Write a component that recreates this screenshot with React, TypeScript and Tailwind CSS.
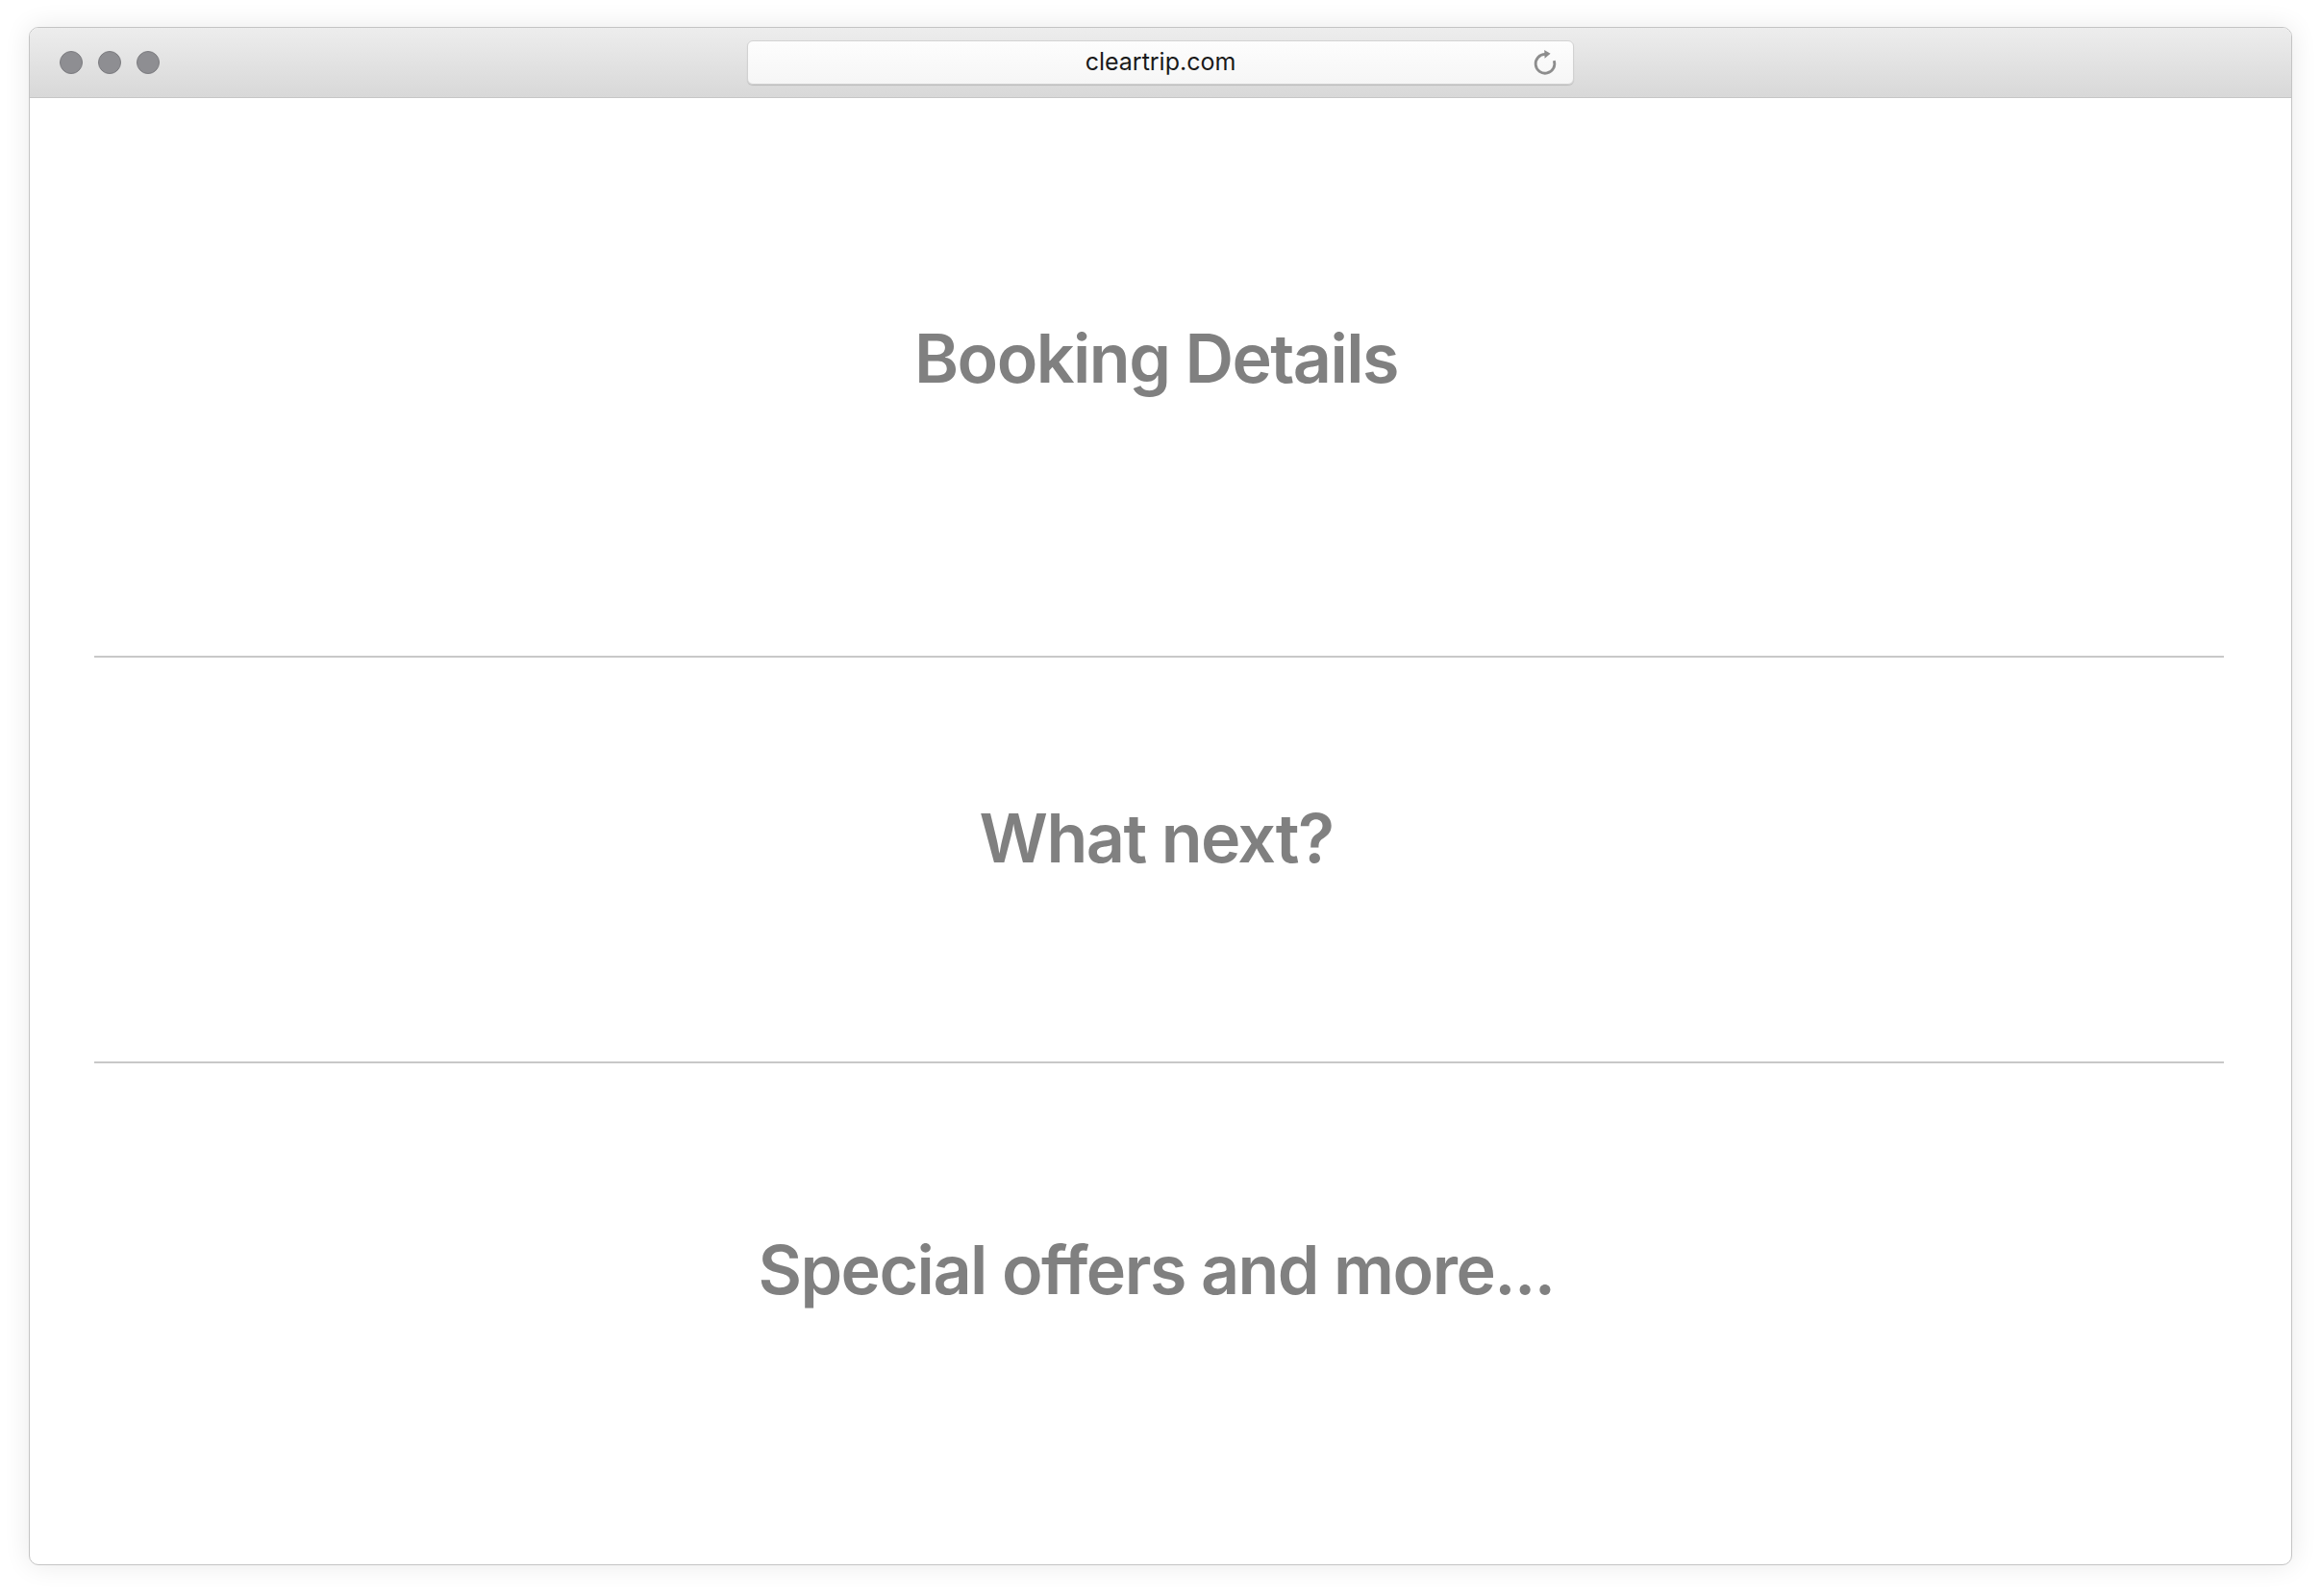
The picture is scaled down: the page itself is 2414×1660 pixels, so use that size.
export default function App() {
  const heading =
    "font-['Inter',sans-serif] font-semibold text-[70px] leading-none text-[#808080] text-center tracking-[-0.022em]";

  return (
    <div className="w-full h-screen bg-white pt-[28px] px-[30px]">
      <div className="h-[1600px] flex flex-col rounded-[10px] border border-[#c4c4c4] bg-white overflow-hidden shadow-[0_0_28px_rgba(0,0,0,0.09)]">
        {/* title bar */}
        <div className="relative h-[73px] shrink-0 flex items-center border-b border-[#c6c6c6] bg-[linear-gradient(#ededed,#d8d8d8)]">
          <div className="flex gap-[16px] pl-[31px]">
            <span className="w-[24px] h-[24px] rounded-full bg-[#8e8e92] border border-[#7c7c80]" />
            <span className="w-[24px] h-[24px] rounded-full bg-[#8e8e92] border border-[#7c7c80]" />
            <span className="w-[24px] h-[24px] rounded-full bg-[#8e8e92] border border-[#7c7c80]" />
          </div>
          <div className="absolute left-1/2 top-[13px] -translate-x-1/2 w-[860px] h-[46px] rounded-[6px] bg-[linear-gradient(#fdfdfd,#f6f6f6)] border border-[#d2d2d2] shadow-[0_1px_1px_rgba(0,0,0,0.15)] flex items-center justify-center">
            <span className="font-['Inter',sans-serif] text-[25px] text-[#1a1a1a]">cleartrip.com</span>
            <svg
              className="absolute right-[13px] top-1/2 -translate-y-1/2"
              width="32"
              height="32"
              viewBox="0 0 24 24"
              fill="none"
            >
              <path d="M12 5.6 A7.4 7.4 0 1 0 19 10.6" stroke="#8d8d8d" strokeWidth="2.1" />
              <path d="M11.4 2.2 L16.2 5 L11.7 8.9 Z" fill="#8d8d8d" />
            </svg>
          </div>
        </div>

        {/* content */}
        <div className="flex-1 flex flex-col">
          <section className="h-[580px] pt-[236px] pr-[9px]">
            <h1 className={heading}>Booking Details</h1>
          </section>
          <div className="ml-[67px] mr-[70px] h-[2px] bg-[#c8c8c8]" />
          <section className="h-[420px] pt-[153px] pr-[9px]">
            <h2 className={heading}>What next?</h2>
          </section>
          <div className="ml-[67px] mr-[70px] h-[2px] bg-[#c8c8c8]" />
          <section className="flex-1 pt-[180px] pr-[9px]">
            <h2 className={heading}>Special offers and more...</h2>
          </section>
        </div>
      </div>
    </div>
  );
}
